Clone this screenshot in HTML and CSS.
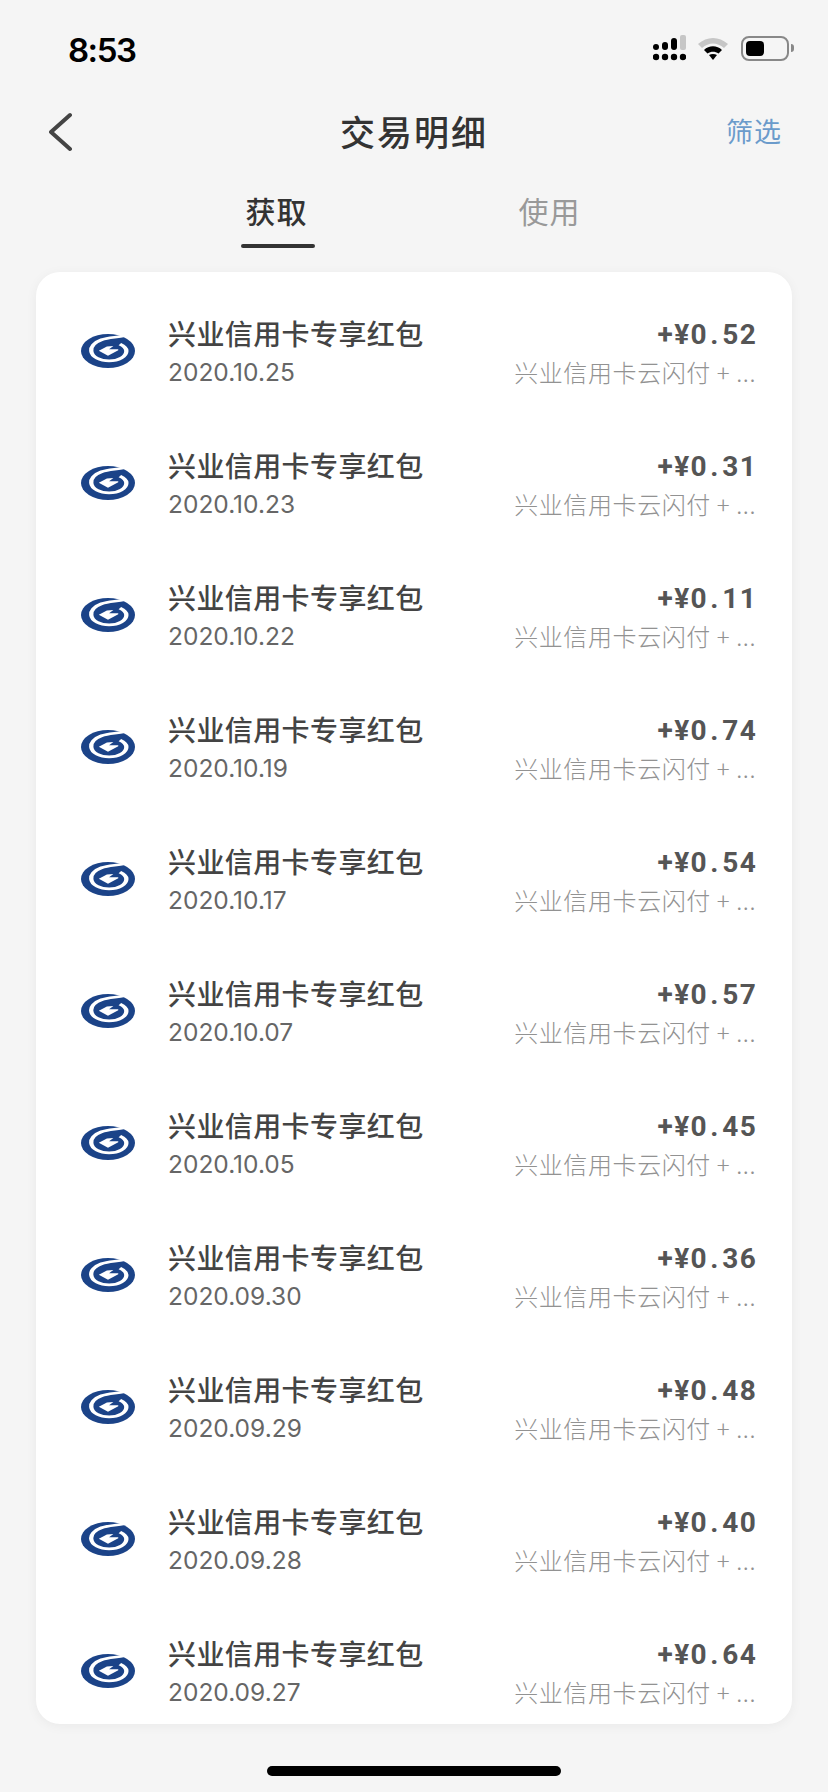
FILE: index.html
```html
<!DOCTYPE html>
<html lang="zh-CN">

<head>
    <meta charset="UTF-8">
    <meta name="viewport" content="width=device-width, initial-scale=1.0">
    <title>交易明细</title>
    <link rel="stylesheet" href="styles.css">
</head>

<body>

    <svg class="defs" width="0" height="0">
        <symbol id="bank-logo" viewBox="0 0 100 100" preserveAspectRatio="none">
            <circle cx="50" cy="50" r="50" fill="#1b4388"/>
            <path d="M80 5 C66 10 50 10 38 17 C24 25 18 38 19 50 C20 68 36 79 52 79 C70 79 84 66 84 50 C84 42 79 35 72 30" fill="none" stroke="#fff" stroke-width="8"/>
            <path d="M33 49 L48 37 L60 35 L52 45 H69 V48 L50 64 Z" fill="#fff"/>
        </symbol>
    </svg>

    <div class="status-bar">
        <span class="clock">8:53</span>
        <div class="status-icons">
            <svg class="signal" width="33" height="26" viewBox="0 0 33 26">
                <rect x="27" y="0" width="6" height="15" rx="2" fill="#c6c6c6"/>
                <rect x="18" y="3" width="6" height="12" rx="3"/>
                <rect x="9" y="7" width="6" height="8" rx="3"/>
                <circle cx="3" cy="12" r="3"/>
                <circle cx="3" cy="22" r="3.2"/>
                <circle cx="12" cy="22" r="3.2"/>
                <circle cx="21" cy="22" r="3.2"/>
                <circle cx="30" cy="22" r="3.2"/>
            </svg>
            <svg class="wifi" width="32" height="24" viewBox="0 0 32 24">
                <path d="M1 8 C10 0 22 0 31 8 L27 12 C20 6 12 6 5 12 Z" fill="#c6c6c6"/>
                <path d="M7 14 C12 9 20 9 25 14 L21.500 17.500 C18 15 14 15 10.500 17.500 Z"/>
                <path d="M12 19 C14.500 17.500 17.500 17.500 20 19 L16 24 Z"/>
            </svg>
            <div class="battery">
                <div class="battery-level"></div>
            </div>
            <div class="battery-tip"></div>
        </div>
    </div>

    <div class="nav-bar">
        <svg class="back" width="24" height="40" viewBox="0 0 24 40">
            <path d="M21 3 L2 20 L21 37" fill="none" stroke="#444" stroke-width="4" stroke-linecap="round" stroke-linejoin="round"/>
        </svg>
        <h1 class="nav-title">交易明细</h1>
        <span class="filter">筛选</span>
    </div>

    <div class="tabs">
        <span class="tab active">获取</span>
        <span class="tab">使用</span>
    </div>

    <div class="card">
        <div class="row">
            <svg class="logo"><use href="#bank-logo"/></svg>
            <div class="info"><div class="name">兴业信用卡专享红包</div><div class="date">2020.10.25</div></div>
            <div class="detail"><div class="amount">+¥0<span class="dot">.</span>52</div><div class="source">兴业信用卡云闪付 + ...</div></div>
        </div>
        <div class="row">
            <svg class="logo"><use href="#bank-logo"/></svg>
            <div class="info"><div class="name">兴业信用卡专享红包</div><div class="date">2020.10.23</div></div>
            <div class="detail"><div class="amount">+¥0<span class="dot">.</span>31</div><div class="source">兴业信用卡云闪付 + ...</div></div>
        </div>
        <div class="row">
            <svg class="logo"><use href="#bank-logo"/></svg>
            <div class="info"><div class="name">兴业信用卡专享红包</div><div class="date">2020.10.22</div></div>
            <div class="detail"><div class="amount">+¥0<span class="dot">.</span>11</div><div class="source">兴业信用卡云闪付 + ...</div></div>
        </div>
        <div class="row">
            <svg class="logo"><use href="#bank-logo"/></svg>
            <div class="info"><div class="name">兴业信用卡专享红包</div><div class="date">2020.10.19</div></div>
            <div class="detail"><div class="amount">+¥0<span class="dot">.</span>74</div><div class="source">兴业信用卡云闪付 + ...</div></div>
        </div>
        <div class="row">
            <svg class="logo"><use href="#bank-logo"/></svg>
            <div class="info"><div class="name">兴业信用卡专享红包</div><div class="date">2020.10.17</div></div>
            <div class="detail"><div class="amount">+¥0<span class="dot">.</span>54</div><div class="source">兴业信用卡云闪付 + ...</div></div>
        </div>
        <div class="row">
            <svg class="logo"><use href="#bank-logo"/></svg>
            <div class="info"><div class="name">兴业信用卡专享红包</div><div class="date">2020.10.07</div></div>
            <div class="detail"><div class="amount">+¥0<span class="dot">.</span>57</div><div class="source">兴业信用卡云闪付 + ...</div></div>
        </div>
        <div class="row">
            <svg class="logo"><use href="#bank-logo"/></svg>
            <div class="info"><div class="name">兴业信用卡专享红包</div><div class="date">2020.10.05</div></div>
            <div class="detail"><div class="amount">+¥0<span class="dot">.</span>45</div><div class="source">兴业信用卡云闪付 + ...</div></div>
        </div>
        <div class="row">
            <svg class="logo"><use href="#bank-logo"/></svg>
            <div class="info"><div class="name">兴业信用卡专享红包</div><div class="date">2020.09.30</div></div>
            <div class="detail"><div class="amount">+¥0<span class="dot">.</span>36</div><div class="source">兴业信用卡云闪付 + ...</div></div>
        </div>
        <div class="row">
            <svg class="logo"><use href="#bank-logo"/></svg>
            <div class="info"><div class="name">兴业信用卡专享红包</div><div class="date">2020.09.29</div></div>
            <div class="detail"><div class="amount">+¥0<span class="dot">.</span>48</div><div class="source">兴业信用卡云闪付 + ...</div></div>
        </div>
        <div class="row">
            <svg class="logo"><use href="#bank-logo"/></svg>
            <div class="info"><div class="name">兴业信用卡专享红包</div><div class="date">2020.09.28</div></div>
            <div class="detail"><div class="amount">+¥0<span class="dot">.</span>40</div><div class="source">兴业信用卡云闪付 + ...</div></div>
        </div>
        <div class="row">
            <svg class="logo"><use href="#bank-logo"/></svg>
            <div class="info"><div class="name">兴业信用卡专享红包</div><div class="date">2020.09.27</div></div>
            <div class="detail"><div class="amount">+¥0<span class="dot">.</span>64</div><div class="source">兴业信用卡云闪付 + ...</div></div>
        </div>
    </div>

    <div class="home-bar">
        <div class="home-indicator"></div>
    </div>

</body>

</html>
```

FILE: styles.css
```css
* {
    box-sizing: border-box;
}

body {
    margin: 0;
    height: 1792px;
    overflow: hidden;
    background-color: #f5f5f5;
    font-family: "Noto Sans CJK SC", "Noto Sans", sans-serif;
    color: #333;
}

.defs {
    display: block;
}

.status-bar {
    height: 90px;
    padding: 30px 34px 0 68px;
    display: flex;
    justify-content: space-between;
    align-items: flex-start;
}

.clock {
    font-family: Inter, sans-serif;
    font-size: 33px;
    font-weight: 600;
    line-height: 40px;
    letter-spacing: -1.500px;
    color: #000;
}

.status-icons {
    display: flex;
    align-items: center;
    padding-top: 5px;
}

.signal {
    margin-right: 11px;
}

.wifi {
    margin-right: 12px;
}

.battery {
    width: 48px;
    height: 25px;
    padding: 3px;
    border: 2px solid #888;
    border-radius: 8px;
}

.battery-level {
    width: 18px;
    height: 100%;
    background-color: #000;
    border-radius: 4px;
}

.battery-tip {
    width: 3px;
    height: 8px;
    margin-left: 2px;
    background-color: #888;
    border-radius: 0 3px 3px 0;
}

.nav-bar {
    height: 80px;
    padding: 0 46px 0 49px;
    display: flex;
    align-items: center;
    justify-content: space-between;
    position: relative;
}

.back {
    margin-top: 4px;
}

.nav-title {
    position: absolute;
    left: 340px;
    margin: 0;
    font-size: 35px;
    font-weight: 500;
    letter-spacing: 2px;
    color: #333;
}

.filter {
    margin-top: 1px;
    font-size: 27px;
    letter-spacing: 1px;
    color: #6b9bcb;
}

.tabs {
    height: 102px;
    padding-right: 2px;
    display: flex;
    justify-content: center;
    gap: 211px;
}

.tab {
    position: relative;
    height: 78px;
    padding-top: 18px;
    font-size: 30px;
    line-height: 44px;
    letter-spacing: 1px;
    color: #999;
}

.tab.active {
    font-weight: 500;
    color: #333;
}

.tab.active::after {
    content: "";
    position: absolute;
    left: -5px;
    right: -7px;
    bottom: 0;
    height: 4px;
    background-color: #333;
    border-radius: 2px;
}

.card {
    margin: 0 36px;
    height: 1452px;
    padding-top: 14px;
    overflow: hidden;
    background-color: #fff;
    border-radius: 24px;
    box-shadow: 0 2px 12px rgba(0, 0, 0, 0.05);
}

.row {
    height: 132px;
    padding: 0 36px 0 45px;
    display: flex;
    align-items: center;
}

.logo {
    width: 54px;
    height: 34px;
    margin-right: 33px;
    margin-bottom: 2px;
    flex-shrink: 0;
}

.info {
    flex: 1;
}

.name {
    font-size: 28px;
    font-weight: 500;
    line-height: 38px;
    letter-spacing: 0.4px;
    color: #444;
}

.date {
    margin-top: 1px;
    font-family: Inter, sans-serif;
    font-size: 24.500px;
    line-height: 38px;
    color: #666;
}

.detail {
    padding-top: 2px;
    text-align: right;
}

.amount {
    margin-right: -1px;
    font-family: Roboto, sans-serif;
    font-size: 28px;
    font-weight: 700;
    line-height: 38px;
    letter-spacing: 1.300px;
    color: #555;
}

.dot {
    margin: 0 2.500px;
}

.source {
    margin-top: -1px;
    font-size: 24px;
    font-weight: 300;
    line-height: 38px;
    letter-spacing: 0.600px;
    color: #929292;
    white-space: nowrap;
}

.home-bar {
    padding-top: 42px;
    display: flex;
    justify-content: center;
}

.home-indicator {
    width: 294px;
    height: 10px;
    background-color: #000;
    border-radius: 5px;
}
```
